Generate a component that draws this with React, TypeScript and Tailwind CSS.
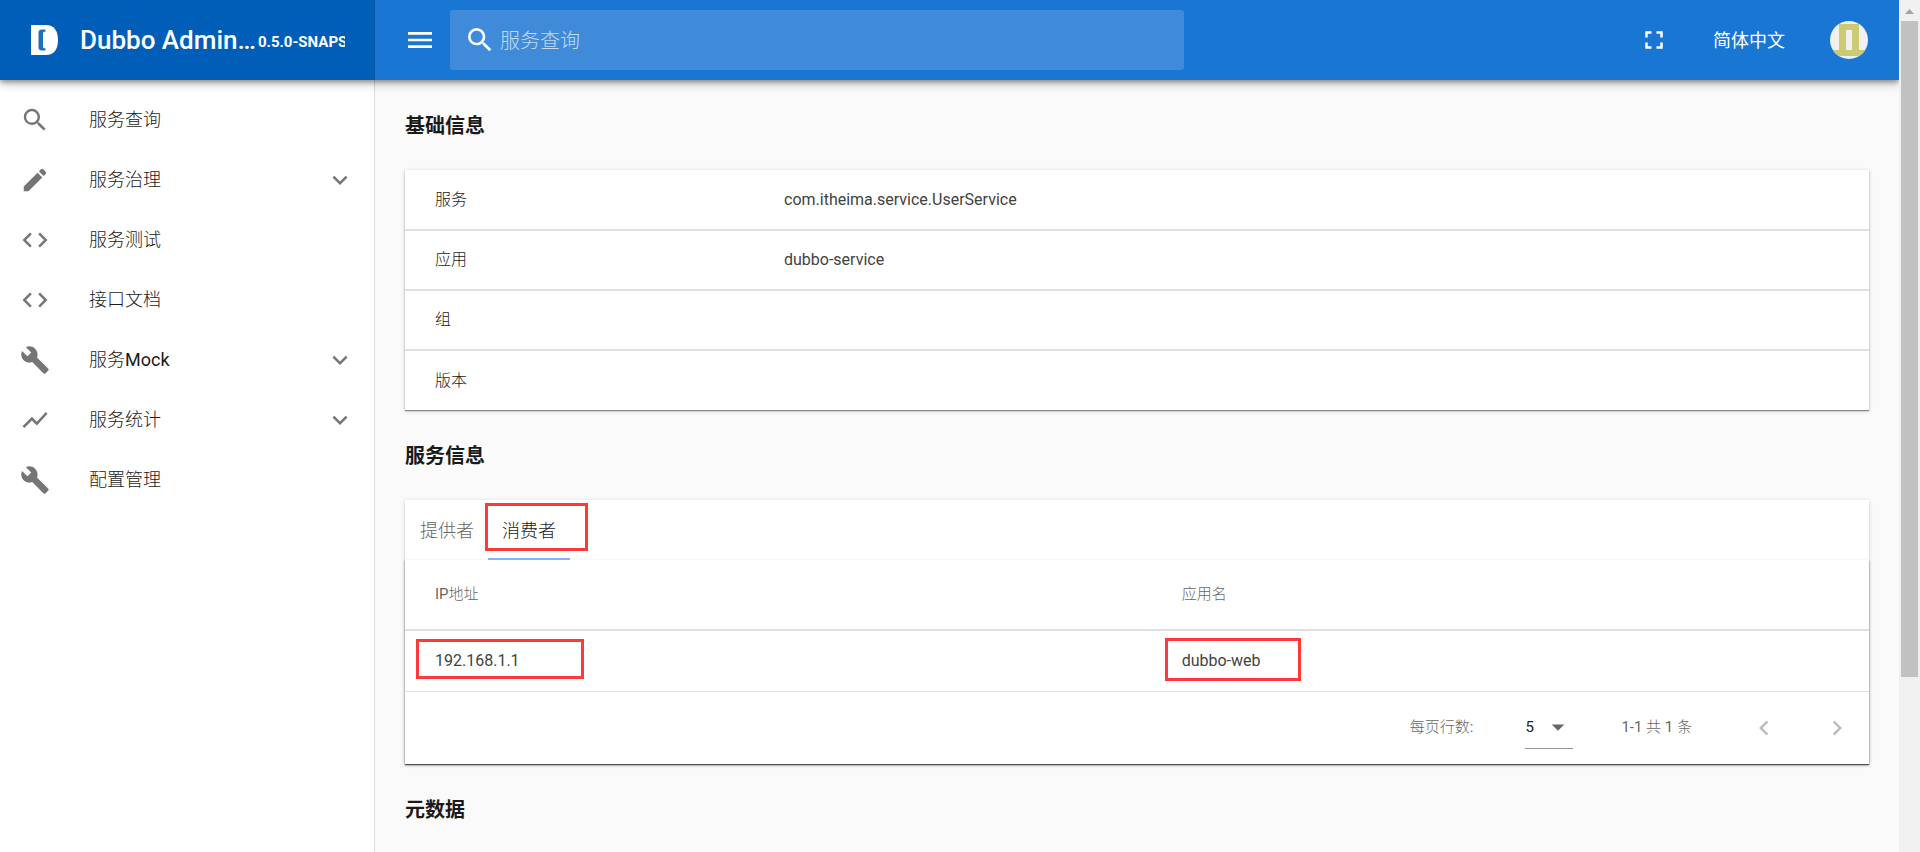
import React from 'react';
import {
  MdArrowDropDown,
  MdBuild,
  MdChevronLeft,
  MdChevronRight,
  MdCode,
  MdEdit,
  MdFullscreen,
  MdKeyboardArrowDown,
  MdMenu,
  MdSearch,
  MdShowChart,
} from 'react-icons/md';
import type { IconType } from 'react-icons';

interface NavItem {
  title: string;
  icon: IconType;
  expandable?: boolean;
}

const navItems: NavItem[] = [
  { title: '服务查询', icon: MdSearch },
  { title: '服务治理', icon: MdEdit, expandable: true },
  { title: '服务测试', icon: MdCode },
  { title: '接口文档', icon: MdCode },
  { title: '服务Mock', icon: MdBuild, expandable: true },
  { title: '服务统计', icon: MdShowChart, expandable: true },
  { title: '配置管理', icon: MdBuild },
];

const basicInfo = [
  { label: '服务', value: 'com.itheima.service.UserService' },
  { label: '应用', value: 'dubbo-service' },
  { label: '组', value: '' },
  { label: '版本', value: '' },
];

const consumers = [{ ip: '192.168.1.1', application: 'dubbo-web' }];

const Logo = () => (
  <svg viewBox="0 0 27 30" className="h-[30px] w-[27px] flex-shrink-0" aria-hidden="true">
    <path d="M0 0h15c8 0 12 6 12 15s-4 15-12 15H0z" fill="#fff" />
    <path d="M14.500 4.500H11c-2.500 0-3.500 1-3.500 3.500v14c0 2.500 1 3.500 3.500 3.500h3.500v-2c-1.800 0-2.500-.7-2.500-2.500v-12c0-1.800.7-2.500 2.500-2.500z" fill="#1f6fc0" />
  </svg>
);

const Avatar = () => (
  <svg viewBox="0 0 38 38" className="h-[38px] w-[38px]" aria-hidden="true">
    <clipPath id="avatar-clip">
      <circle cx="19" cy="19" r="19" />
    </clipPath>
    <g clipPath="url(#avatar-clip)">
      <path d="M0 0h38v38H0z" fill="#f0f0f0" />
      <path d="M9 3h20v26h9v6H0v-6h9zM16 9v20h6V9z" fill="#cacb72" fillRule="evenodd" />
    </g>
  </svg>
);

const Header = () => (
  <header className="relative z-10 flex h-20 flex-shrink-0 bg-[#1976d2] text-white shadow-[0_2px_5px_rgba(0,0,0,0.35),0_4px_10px_rgba(0,0,0,0.2)]">
    <div className="flex w-[375px] flex-shrink-0 items-center border-r border-[#0a57a3] bg-[#005eb8] pr-[29px] pl-[31px]">
      <Logo />
      <div className="ml-[22px] flex min-w-0 flex-1 items-center overflow-hidden whitespace-nowrap">
        <span className="text-[26px] font-medium">Dubbo Admin…</span>
        <span className="ml-0.5 pt-1 text-[15px] font-bold">0.5.0-SNAPSHOT</span>
      </div>
    </div>
    <div className="flex min-w-0 flex-1 items-center pr-[31px] pl-[29px]">
      <button type="button" aria-label="菜单">
        <MdMenu className="h-8 w-8" />
      </button>
      <label className="ml-[14px] flex h-[60px] max-w-[734px] flex-1 items-center rounded-[3px] bg-[#3f8bda] pl-[14px]">
        <MdSearch className="h-8 w-8" />
        <input
          type="text"
          aria-label="服务查询"
          placeholder="服务查询"
          className="ml-1 min-w-0 flex-1 bg-transparent pt-0.5 text-xl outline-none placeholder:text-white/70"
        />
      </label>
      <div className="ml-auto flex items-center">
        <button type="button" aria-label="全屏">
          <MdFullscreen className="h-[30px] w-[30px]" />
        </button>
        <button type="button" className="ml-[44px] pb-0.5 font-['Noto_Sans_CJK_SC',sans-serif] text-lg">
          简体中文
        </button>
        <button type="button" className="ml-[45px]" aria-label="用户">
          <Avatar />
        </button>
      </div>
    </div>
  </header>
);

const Sidebar = () => (
  <nav className="w-[375px] flex-shrink-0 border-r border-[#dcdcdc] bg-white pt-2.5">
    <ul>
      {navItems.map(({ title, icon: Icon, expandable }) => (
        <li key={title}>
          <a href="#" className="flex h-[60px] items-center pr-[19px] pl-5 text-lg">
            <Icon className="h-[30px] w-[30px] text-[#757575]" />
            <span className="ml-[39px] flex-1">{title}</span>
            {expandable && <MdKeyboardArrowDown className="h-[30px] w-[30px] text-[#757575]" />}
          </a>
        </li>
      ))}
    </ul>
  </nav>
);

const SectionTitle = ({ children }: { children: React.ReactNode }) => (
  <h3 className="flex h-[90px] items-center font-['Noto_Sans_CJK_SC',sans-serif] text-xl font-bold">
    {children}
  </h3>
);

const BasicInfo = () => (
  <table className="w-full bg-white text-base shadow-[0_1px_1px_rgba(0,0,0,0.4),0_1px_4px_rgba(0,0,0,0.2)]">
    <tbody>
      {basicInfo.map(({ label, value }) => (
        <tr key={label} className="h-[60px] border-b-2 border-[#e0e0e0] last:border-b-0">
          <th scope="row" className="w-[349px] px-[30px] text-left font-normal">{label}</th>
          <td className="px-[30px] text-[#424242]">{value}</td>
        </tr>
      ))}
    </tbody>
  </table>
);

const ServiceInfo = () => (
  <div className="bg-white shadow-[0_1px_4px_rgba(0,0,0,0.2)]">
    <div role="tablist" className="flex h-[60px] px-[1px] text-lg">
      <button type="button" role="tab" aria-selected="false" className="px-3.5 pt-0.5 text-[#666]">
        提供者
      </button>
      <button type="button" role="tab" aria-selected="true" className="relative border-b-2 border-[#82b1ff] px-3.5 pt-1">
        消费者
        <span className="absolute top-[3px] -left-[3px] h-12 w-[103px] border-3 border-[#ff3838]" />
      </button>
    </div>
    <div className="shadow-[0_1px_1px_rgba(0,0,0,0.6),0_1px_3px_rgba(0,0,0,0.2)]">
      <table className="w-full text-left">
        <thead>
          <tr className="h-[70px] border-b-2 border-[#e0e0e0] text-[15px] text-[#666]">
            <th className="w-[51%] px-[30px] font-normal">IP地址</th>
            <th className="px-[30px] font-normal">应用名</th>
          </tr>
        </thead>
        <tbody>
          {consumers.map(({ ip, application }) => (
            <tr key={ip} className="h-[61px] border-b border-[#e0e0e0] text-base text-[#424242]">
              <td className="relative px-[30px]">
                {ip}
                <span className="absolute top-2 left-[11px] h-10 w-[168px] border-3 border-[#ff3838]" />
              </td>
              <td className="relative px-[30px]">
                {application}
                <span className="absolute top-[7px] left-[13px] h-[43px] w-[136px] border-3 border-[#ff3838]" />
              </td>
            </tr>
          ))}
        </tbody>
      </table>
      <div className="flex h-[72px] items-center justify-end pr-[17px] text-[15px] text-[#666]">
        <label htmlFor="rows-per-page">每页行数:</label>
        <div className="relative ml-[52px] flex h-[42px] w-12 items-center border-b border-[#949494]">
          <select id="rows-per-page" defaultValue="5" className="h-full w-full appearance-none bg-transparent text-[#212121] outline-none">
            <option value="5">5</option>
            <option value="10">10</option>
            <option value="25">25</option>
          </select>
          <MdArrowDropDown className="pointer-events-none absolute right-0 h-[30px] w-[30px]" />
        </div>
        <span className="ml-12">1-1 共 1 条</span>
        <button type="button" disabled aria-label="上一页" className="ml-[57px] text-[#bdbdbd]">
          <MdChevronLeft className="h-[30px] w-[30px]" />
        </button>
        <button type="button" disabled aria-label="下一页" className="ml-[43px] text-[#bdbdbd]">
          <MdChevronRight className="h-[30px] w-[30px]" />
        </button>
      </div>
    </div>
  </div>
);

const Scrollbar = () => (
  <div className="flex w-[21px] flex-shrink-0 flex-col items-center bg-[#f0f0f0]" aria-hidden="true">
    <svg viewBox="0 0 21 21" className="h-[21px] w-[21px]">
      <path d="M6 14l4.500-5 4.500 5z" fill="#a3a3a3" />
    </svg>
    <div className="h-[77%] w-[17px] bg-[#c1c1c1]" />
  </div>
);

export default function App() {
  return (
    <div className="flex h-screen overflow-hidden bg-[#fafafa] font-[Roboto,'Noto_Sans_CJK_SC_Light','Noto_Sans_CJK_SC',sans-serif] text-[#1a1a1a]">
      <div className="flex min-w-0 flex-1 flex-col overflow-hidden">
        <Header />
        <div className="flex min-h-0 flex-1">
          <Sidebar />
          <main className="min-w-0 flex-1 px-[30px]">
            <SectionTitle>基础信息</SectionTitle>
            <BasicInfo />
            <SectionTitle>服务信息</SectionTitle>
            <ServiceInfo />
            <SectionTitle>元数据</SectionTitle>
          </main>
        </div>
      </div>
      <Scrollbar />
    </div>
  );
}
